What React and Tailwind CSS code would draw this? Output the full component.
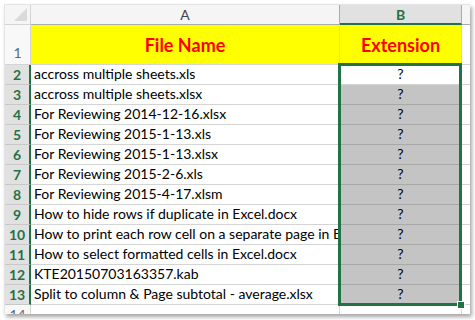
import React from 'react';

const rows = [
  'accross multiple sheets.xls',
  'accross multiple sheets.xlsx',
  'For Reviewing 2014-12-16.xlsx',
  'For Reviewing 2015-1-13.xls',
  'For Reviewing 2015-1-13.xlsx',
  'For Reviewing 2015-2-6.xls',
  'For Reviewing 2015-4-17.xlsm',
  'How to hide rows if duplicate in Excel.docx',
  'How to print each row cell on a separate page in Excel.docx',
  'How to select formatted cells in Excel.docx',
  'KTE20150703163357.kab',
  'Split to column & Page subtotal - average.xlsx',
];

const font = { fontFamily: 'Lato, "Open Sans", sans-serif' };

export default function App() {
  return (
    <div className="w-[475px] h-[320px] bg-white p-[4px]" style={font}>
      <div className="relative w-[466px] h-[310px] overflow-hidden bg-white border-l border-t border-[#e4e4e4] shadow-[2px_3px_4px_rgba(0,0,0,0.35)]">
        <div className="grid grid-cols-[26px_309px_122px_9px] grid-rows-[20px_40px_repeat(13,20px)]">
          {/* column headers */}
          <div className="relative bg-[#f5f5f5] border-r border-b border-[#d4d4d4]">
            <div className="absolute right-[3px] bottom-[3px] w-0 h-0 border-l-[13px] border-l-transparent border-b-[13px] border-b-[#dadada]" />
          </div>
          <div className="bg-[#f5f5f5] border-r border-b border-[#ababab] flex items-center justify-center text-[14px] text-[#444]">A</div>
          <div className="bg-[#e1e1e1] border-r border-[#ababab] border-b-2 border-b-[#217346] flex items-center justify-center text-[14px] font-bold text-[#217346]">B</div>
          <div className="bg-[#f5f5f5] border-b border-[#ababab]" />

          {/* row 1 */}
          <div className="bg-[#f8f8f8] border-r border-b border-[#d4d4d4] flex items-end justify-center pb-[1px] text-[14px] text-[#5a6a80]">1</div>
          <div className="bg-[#ffff00] border-r border-b border-[#d4d4d4] flex items-center justify-center text-[18px] font-bold text-[#ff0000] pt-[1px]">File Name</div>
          <div className="bg-[#ffff00] border-r border-b border-[#d4d4d4] flex items-center justify-center text-[18px] font-bold text-[#ff0000] pt-[1px]">Extension</div>
          <div className="border-b border-[#d4d4d4]" />

          {rows.map((name, i) => (
            <React.Fragment key={i}>
              <div className="bg-[#e1e1e1] border-b border-[#c8c8c8] border-r-2 border-r-[#217346] flex items-center justify-center text-[14px] font-bold text-[#217346]">{i + 2}</div>
              <div className="border-r border-b border-[#d4d4d4] flex items-end pl-[3px] pb-[1px] text-[14px] text-black whitespace-nowrap overflow-hidden leading-[18px]">{name}</div>
              <div className={`${i === 0 ? 'bg-white border-[#d4d4d4]' : 'bg-[#c4c4c4] border-[#a8a8a8]'} border-r border-b flex items-end justify-center pb-[1px] text-[14px] text-black leading-[18px]`}>?</div>
              <div className="border-b border-[#d4d4d4]" />
            </React.Fragment>
          ))}

          {/* row 14 */}
          <div className="bg-[#f8f8f8] border-r border-[#d4d4d4] flex items-end justify-center text-[14px] text-[#5a6a80]">14</div>
          <div className="border-r border-[#d4d4d4]" />
          <div className="border-r border-[#d4d4d4]" />
          <div />
        </div>

        {/* selection border */}
        <div className="absolute left-[333px] top-[58px] w-[124px] h-[243px] border-[3px] border-[#217346] pointer-events-none" />
        <div className="absolute left-[452px] top-[296px] w-[8px] h-[8px] bg-[#217346] border border-white" />
      </div>
    </div>
  );
}
